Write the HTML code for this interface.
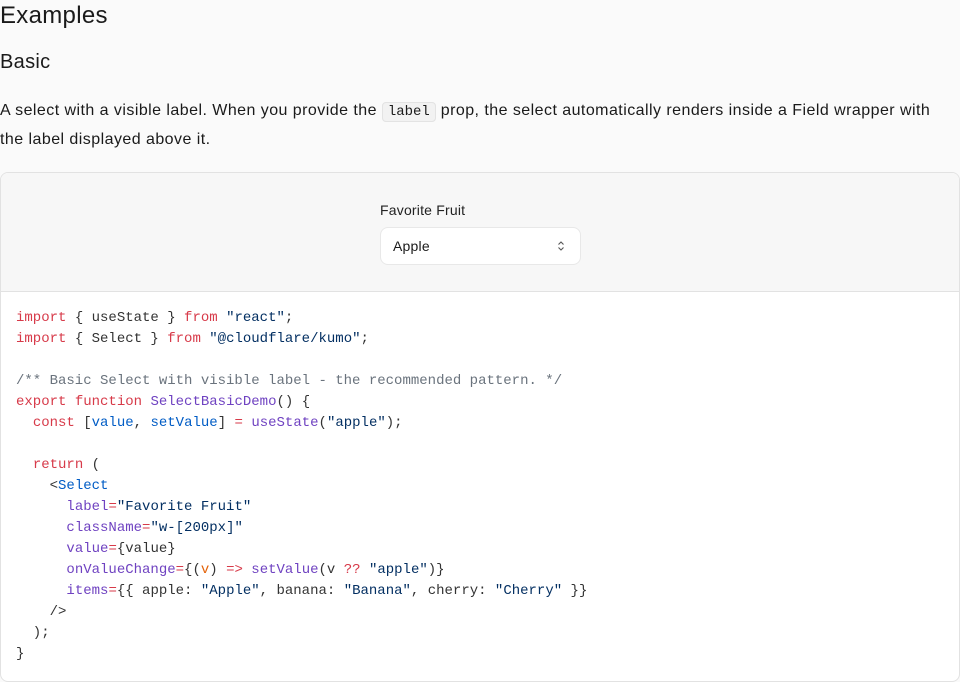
<!DOCTYPE html>
<html><head><style>
body{margin:0;background:#fafafa;font-family:"Liberation Sans",sans-serif;color:#1a1a1a;width:960px;height:682px;overflow:hidden;position:relative}
h1{position:absolute;margin:0;left:0;top:2px;font-size:24px;font-weight:400;line-height:28px;letter-spacing:0.3px}
h2{position:absolute;margin:0;left:0;top:50px;font-size:20px;font-weight:400;line-height:24px;letter-spacing:0.3px}
p{position:absolute;margin:0;left:0;top:97px;font-size:16px;line-height:28px;width:960px;letter-spacing:0.45px;white-space:nowrap}
code.i{font-family:"Liberation Mono",monospace;font-size:14px;background:#f2f2f2;border:1px solid #e3e3e3;border-radius:4px;padding:1px 5px;letter-spacing:0}
.card{position:absolute;left:0;top:172px;width:958px;height:508px;border:1px solid #e2e2e2;border-radius:8px;background:#fff;overflow:hidden}
.prev{height:118px;background:#f7f7f7;border-bottom:1px solid #e2e2e2;position:relative}
.lab{position:absolute;left:379px;top:29px;font-size:14px;color:#222;letter-spacing:0.2px}
.sel{position:absolute;left:379px;top:54px;width:201px;height:38px;border:1px solid #e8e8e8;border-radius:8px;background:#fff;font-size:14px;box-sizing:border-box}
.sel span{position:absolute;left:12px;top:10px;letter-spacing:0.2px}
pre{position:absolute;left:16px;top:308px;margin:0;font-family:"Liberation Mono",monospace;font-size:14px;line-height:21px;color:#333;white-space:pre}
.k{color:#d73a49}.s{color:#032f62}.c{color:#6a737d}.f{color:#6f42c1}.v{color:#005cc5}.o{color:#e36209}
</style></head><body>
<h1>Examples</h1>
<h2>Basic</h2>
<p>A select with a visible label. When you provide the <code class="i">label</code> prop, the select automatically renders inside a Field wrapper with<br>the label displayed above it.</p>
<div class="card">
<div class="prev"><div class="lab">Favorite Fruit</div>
<div class="sel"><span>Apple</span><svg style="position:absolute;left:175px;top:12px" width="10" height="12" viewBox="0 0 10 12"><path d="M2.5 4.5L5 2l2.5 2.5M2.5 7.5L5 10l2.5-2.5" fill="none" stroke="#555" stroke-width="1.1"/></svg></div></div>
</div>
<pre><span class="k">import</span> { useState } <span class="k">from</span> <span class="s">"react"</span>;
<span class="k">import</span> { Select } <span class="k">from</span> <span class="s">"@cloudflare/kumo"</span>;

<span class="c">/** Basic Select with visible label - the recommended pattern. */</span>
<span class="k">export</span> <span class="k">function</span> <span class="f">SelectBasicDemo</span>() {
  <span class="k">const</span> [<span class="v">value</span>, <span class="v">setValue</span>] <span class="k">=</span> <span class="f">useState</span>(<span class="s">"apple"</span>);

  <span class="k">return</span> (
    &lt;<span class="v">Select</span>
      <span class="f">label</span><span class="k">=</span><span class="s">"Favorite Fruit"</span>
      <span class="f">className</span><span class="k">=</span><span class="s">"w-[200px]"</span>
      <span class="f">value</span><span class="k">=</span>{value}
      <span class="f">onValueChange</span><span class="k">=</span>{(<span class="o">v</span>) <span class="k">=&gt;</span> <span class="f">setValue</span>(v <span class="k">??</span> <span class="s">"apple"</span>)}
      <span class="f">items</span><span class="k">=</span>{{ apple: <span class="s">"Apple"</span>, banana: <span class="s">"Banana"</span>, cherry: <span class="s">"Cherry"</span> }}
    /&gt;
  );
}</pre>
</body></html>
